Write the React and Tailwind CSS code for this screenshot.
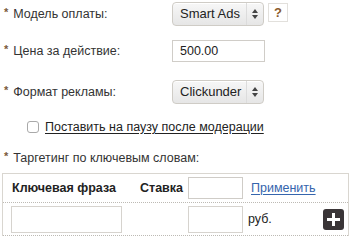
import React from 'react';

function Star() {
    return <span className="text-[#7a5a3a] text-[11px] font-bold mr-[5px] relative -top-[2px]">*</span>;
}

function FakeSelect({ value, width }) {
    return (
        <div
            className={`flex items-stretch h-[24px] ${width} border border-[#cfccc6] rounded-[4px] bg-gradient-to-b from-[#f7f7f7] to-[#e6e6e6] shadow-[inset_0_1px_0_#fff]`}
        >
            <div className="flex-1 flex items-center pl-[7px] text-[13px] text-[#222]">{value}</div>
            <div className="w-[17px] border-l border-[#dcdcdc] flex flex-col items-center justify-center gap-[2px]">
                <svg width="6" height="4" viewBox="0 0 6 4"><path d="M3 0L6 4H0z" fill="#444" /></svg>
                <svg width="6" height="4" viewBox="0 0 6 4"><path d="M0 0H6L3 4z" fill="#444" /></svg>
            </div>
        </div>
    );
}

export default function App() {
    return (
        <div className="w-[350px] h-[241px] bg-white overflow-hidden font-['Liberation_Sans',Arial,sans-serif] text-[12.5px] text-[#333]">
            {/* row 1 */}
            <div className="flex items-center pt-[2px] pl-[4px]">
                <div className="w-[168px] flex items-center"><Star />Модель оплаты:</div>
                <FakeSelect value="Smart Ads" width="w-[92px]" />
                <div className="ml-[4px] w-[20px] h-[19px] border border-[#e2e0dc] flex items-center justify-center text-[#8b5a2b] font-bold text-[13px] self-start mt-[1px]">?</div>
            </div>

            {/* row 2 */}
            <div className="flex items-center mt-[14px] pl-[4px]">
                <div className="w-[168px] flex items-center"><Star />Цена за действие:</div>
                <div className="w-[93px] h-[22px] border border-[#d0cdc8] bg-white flex items-center pl-[7px] text-[#222]">500.00</div>
            </div>

            {/* row 3 */}
            <div className="flex items-center mt-[18px] pl-[4px]">
                <div className="w-[168px] flex items-center"><Star />Формат рекламы:</div>
                <FakeSelect value="Clickunder" width="w-[92px]" />
            </div>

            {/* checkbox */}
            <div className="flex items-center mt-[15px] pl-[27px] h-[16px]">
                <div className="w-[12px] h-[12px] border border-[#a9a9a9] rounded-[3px] bg-white"></div>
                <span className="ml-[6px] underline text-[#222] underline-offset-[2px]">Поставить на паузу после модерации</span>
            </div>

            {/* targeting */}
            <div className="flex items-center mt-[15px] pl-[4px] h-[16px]">
                <Star />Таргетинг по ключевым словам:
            </div>

            {/* table */}
            <div className="ml-[2px] mr-[1px] mt-[7px] border-t border-l border-r border-[#d9d6d0]">
                <div className="flex items-center h-[29px] border-b border-dotted border-[#bdbab4]">
                    <div className="w-[137px] pl-[9px] font-bold text-[#222]">Ключевая фраза</div>
                    <div className="w-[48px] font-bold text-[#222]">Ставка</div>
                    <div className="w-[55px] h-[22px] border border-[#cfccc7] bg-white"></div>
                    <span className="ml-[8px] text-[#3565ad] underline underline-offset-[2px]">Применить</span>
                </div>
                <div className="flex items-center h-[33px] border-b border-dotted border-[#bdbab4]">
                    <div className="ml-[8px] w-[111px] h-[27px] border border-[#d6d3ce] bg-white"></div>
                    <div className="ml-[66px] w-[55px] h-[27px] border border-[#d6d3ce] bg-white"></div>
                    <span className="ml-[5px] text-[#222]">руб.</span>
                    <div className="ml-auto mr-[4px] w-[21px] h-[21px] rounded-[3px] bg-[#3a3537] flex items-center justify-center">
                        <svg width="13" height="13" viewBox="0 0 13 13">
                            <path d="M5 0H8V5H13V8H8V13H5V8H0V5H5z" fill="#fff" />
                        </svg>
                    </div>
                </div>
            </div>
        </div>
    );
}
